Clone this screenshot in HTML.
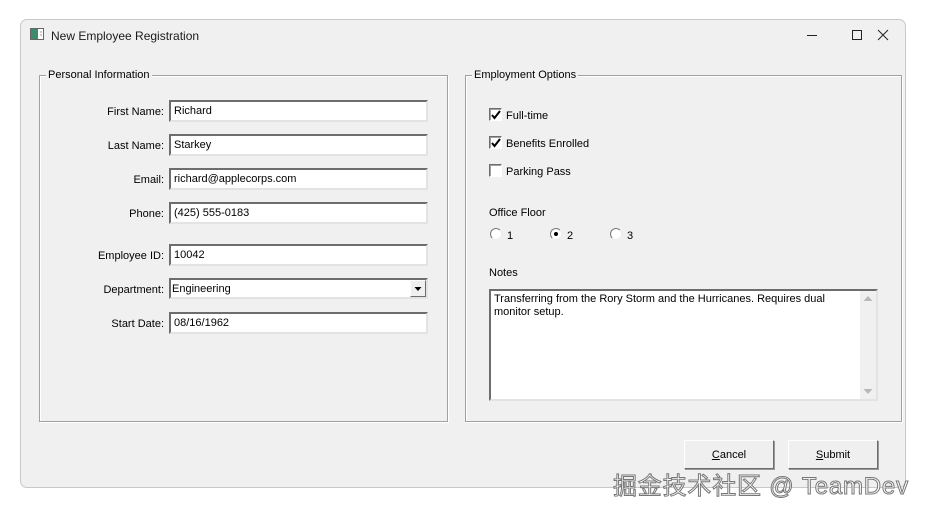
<!DOCTYPE html>
<html><head><meta charset="utf-8"><style>
*{box-sizing:border-box;margin:0;padding:0}
body{width:926px;height:511px;background:#fff;font-family:"Liberation Sans",Tahoma,sans-serif;font-size:11px;color:#000;position:relative;overflow:hidden}
.win{position:absolute;left:20px;top:19px;width:886px;height:469px;background:#f0f0f0;border:1px solid #c8c8c8;border-radius:7px}
.a{position:absolute}
.title{left:30px;top:9px;font-size:12px;color:#1a1a1a}
.grp{position:absolute;border:1px solid #a0a0a0;box-shadow:1px 1px 0 #fff inset,1px 1px 0 #fff}
.grp .lg{position:absolute;top:-7px;left:6px;background:#f0f0f0;padding:0 2px;font-size:11px}
.lbl{position:absolute;width:120px;text-align:right}
.tb{position:absolute;height:22px;background:#fff;border:2px solid;border-color:#6d6d6d #e3e3e3 #e3e3e3 #6d6d6d;padding:3px 0 0 3px}
.cb{position:absolute;width:13px;height:13px;border:1px solid;border-color:#6d6d6d #fff #fff #6d6d6d;background:#fff;box-shadow:inset 1px 1px 0 #a0a0a0}
.rb{position:absolute;width:12px;height:12px;border-radius:50%;background:#fff;border:1px solid #888;border-color:#777 #eee #eee #777}
.btn{position:absolute;width:90px;height:29px;border:1px solid;border-color:#fff #6d6d6d #6d6d6d #fff;box-shadow:1px 1px 0 #999;background:#efefef;text-align:center;line-height:28px}
</style></head><body>
<div class="win">
 <svg class="a" style="left:9px;top:8px" width="14" height="12"><rect x="0.5" y="0.5" width="13" height="11" fill="#fff" stroke="#666"/><rect x="1" y="1" width="7" height="10" fill="#3f8a6b"/><line x1="10" y1="4" x2="12" y2="4" stroke="#999"/><line x1="10" y1="7" x2="12" y2="7" stroke="#999"/></svg>
 <div class="a title">New Employee Registration</div>
 <svg class="a" style="left:783px;top:8px" width="100" height="14"><line x1="3" y1="7.5" x2="13" y2="7.5" stroke="#222"/><rect x="48.5" y="2.5" width="9" height="9" fill="none" stroke="#222"/><path d="M74 2L84 12M84 2L74 12" stroke="#222" fill="none"/></svg>

 <div class="grp" style="left:18px;top:55px;width:409px;height:347px"><span class="lg">Personal Information</span></div>
 <div class="grp" style="left:444px;top:55px;width:437px;height:347px"><span class="lg">Employment Options</span></div>
</div>

<div class="lbl" style="left:44px;top:106px">First Name:</div><div class="tb" style="left:169px;top:100px;width:259px">Richard</div>
<div class="lbl" style="left:44px;top:140px">Last Name:</div><div class="tb" style="left:169px;top:134px;width:259px">Starkey</div>
<div class="lbl" style="left:44px;top:174px">Email:</div><div class="tb" style="left:169px;top:168px;width:259px">richard@applecorps.com</div>
<div class="lbl" style="left:44px;top:208px">Phone:</div><div class="tb" style="left:169px;top:202px;width:259px">(425) 555-0183</div>
<div class="lbl" style="left:44px;top:250px">Employee ID:</div><div class="tb" style="left:169px;top:244px;width:259px">10042</div>
<div class="lbl" style="left:44px;top:284px">Department:</div>
<div class="tb" style="left:169px;top:278px;width:259px;height:21px;padding:3px 0 0 1px">Engineering
 <div class="a" style="right:0;top:0;width:16px;height:17px;background:#f0f0f0;border:1px solid;border-color:#fff #6d6d6d #6d6d6d #fff"><svg width="14" height="15"><path d="M3.5 6h7l-3.5 4z" fill="#000"/></svg></div></div>
<div class="lbl" style="left:44px;top:318px">Start Date:</div><div class="tb" style="left:169px;top:312px;width:259px">08/16/1962</div>

<div class="cb" style="left:489px;top:108px"><svg class="a" style="left:1px;top:1px" width="10" height="10"><path d="M1 5l2.5 3L9 1" stroke="#000" stroke-width="2" fill="none"/></svg></div>
<div class="a" style="left:506px;top:110px">Full-time</div>
<div class="cb" style="left:489px;top:136px"><svg class="a" style="left:1px;top:1px" width="10" height="10"><path d="M1 5l2.5 3L9 1" stroke="#000" stroke-width="2" fill="none"/></svg></div>
<div class="a" style="left:506px;top:138px">Benefits Enrolled</div>
<div class="cb" style="left:489px;top:164px"></div>
<div class="a" style="left:506px;top:166px">Parking Pass</div>
<div class="a" style="left:489px;top:207px">Office Floor</div>
<div class="rb" style="left:490px;top:228px"></div><div class="a" style="left:507px;top:230px">1</div>
<div class="rb" style="left:550px;top:228px"><div class="a" style="left:3px;top:3px;width:4px;height:4px;border-radius:50%;background:#000"></div></div><div class="a" style="left:567px;top:230px">2</div>
<div class="rb" style="left:610px;top:228px"></div><div class="a" style="left:627px;top:230px">3</div>
<div class="a" style="left:489px;top:267px">Notes</div>
<div class="tb" style="left:489px;top:289px;width:389px;height:112px;padding:2px 20px 0 3px;line-height:13px">Transferring from the Rory Storm and the Hurricanes. Requires dual monitor setup.
 <div class="a" style="right:0;top:0;width:16px;height:108px;background:#f0f0f0"><svg width="16" height="108"><path d="M3.5 10l4.5-5 4.5 5z" fill="#b8b8b8"/><path d="M3.5 98l4.5 5 4.5-5z" fill="#b8b8b8"/></svg></div></div>

<div class="btn" style="left:684px;top:440px"><u>C</u>ancel</div>
<div class="btn" style="left:788px;top:440px"><u>S</u>ubmit</div>

<div class="a" style="left:613px;top:466px;font-family:'Liberation Sans','Noto Sans CJK SC',sans-serif;font-size:24px;color:#fff;-webkit-text-stroke:1px #777;white-space:nowrap;letter-spacing:0.8px">掘金技术社区 @ TeamDev</div>
</body></html>
